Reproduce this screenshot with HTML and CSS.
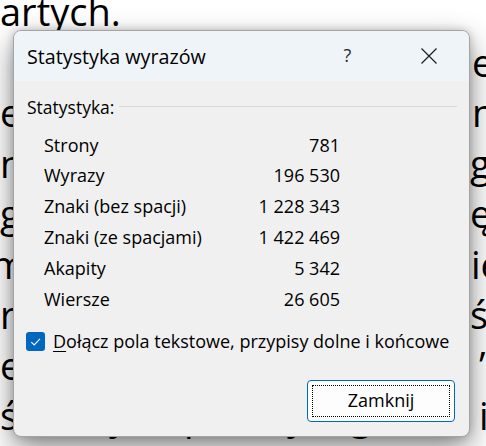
FILE: index.html
```html
<!DOCTYPE html>
<html lang="pl">
<head>
<meta charset="utf-8">
<title>Statystyka wyrazów</title>
<link rel="stylesheet" href="styles.css">
</head>
<body>
<div class="doc">
  <div class="ln"><span class="lft">artych.</span><span class="rgt"></span></div>
  <div class="ln"><span class="lft indent">wszystkich</span><span class="rgt p2">etap</span></div>
  <div class="ln"><span class="lft">etapów, w których</span><span class="rgt p2">mo</span></div>
  <div class="ln"><span class="lft">na podstawie tego</span><span class="rgt">ge</span></div>
  <div class="ln"><span class="lft">gdzie jest to</span><span class="rgt">ęs</span></div>
  <div class="ln"><span class="lft cut">mianowicie</span><span class="rgt p1">ie</span></div>
  <div class="ln"><span class="lft">rozdział</span><span class="rgt">śl</span></div>
  <div class="ln"><span class="lft">esej</span><span class="rgt p9">’</span></div>
  <div class="ln"><span class="lft">świat, jest przez jak głos</span><span class="rgt p9">in</span></div>
</div>

<div class="dialog">
  <div class="titlebar">
    <div class="title">Statystyka wyrazów</div>
    <div class="tb-btn help">?</div>
    <div class="tb-btn close">
      <svg width="16" height="16" viewBox="0 0 16 16"><path d="M0.5 0.5 L15.5 15.5 M15.5 0.5 L0.5 15.5" stroke="#1b1b1b" stroke-width="1.15" fill="none"/></svg>
    </div>
  </div>
  <div class="content">
    <div class="group-head"><span>Statystyka:</span><span class="rule"></span></div>
    <div class="stats">
      <span>Strony</span><span class="val">781</span>
      <span>Wyrazy</span><span class="val">196&nbsp;530</span>
      <span>Znaki (bez spacji)</span><span class="val">1&nbsp;228&nbsp;343</span>
      <span>Znaki (ze spacjami)</span><span class="val">1&nbsp;422&nbsp;469</span>
      <span>Akapity</span><span class="val">5&nbsp;342</span>
      <span>Wiersze</span><span class="val">26&nbsp;605</span>
    </div>
    <div class="check-row">
      <span class="checkbox"><svg width="19" height="19" viewBox="0 0 19 19"><path d="M5.3 10.2 L8.2 13 L14 6.8" stroke="#fff" stroke-width="1.1" fill="none"/></svg></span>
      <span class="check-label"><u>D</u>ołącz pola tekstowe, przypisy dolne i końcowe</span>
    </div>
    <div class="actions">
      <button class="btn" type="button">Zamknij</button>
    </div>
  </div>
</div>
</body>
</html>
```
FILE: styles.css
```css
html, body {
  margin: 0;
  padding: 0;
}
body {
  width: 486px;
  height: 446px;
  overflow: hidden;
  background: #ffffff;
  position: relative;
}
.doc {
  margin-top: -13.7px;
  font-family: "Open Sans", "Noto Sans", sans-serif;
  font-size: 38px;
  line-height: 50.5px;
  color: #000;
}
.ln {
  display: grid;
  grid-template-columns: 470px 1fr;
  height: 50.5px;
  white-space: nowrap;
  overflow: hidden;
}
.lft {
  overflow: hidden;
}
.indent { padding-left: 30px; }
.cut { margin-left: -9px; }
.rgt { overflow: visible; }
.p1 { padding-left: 1px; }
.p2 { padding-left: 2px; }
.p9 { padding-left: 9px; }

.dialog {
  position: absolute;
  left: 13px;
  top: 30px;
  width: 457px;
  height: 407px;
  box-sizing: border-box;
  border: 1px solid #a4a4a4;
  border-radius: 8px;
  background: #f0f0f0;
  box-shadow: 0 12px 30px rgba(0, 0, 0, 0.46), 0 0 8px rgba(0, 0, 0, 0.2);
  overflow: hidden;
  display: flex;
  flex-direction: column;
  font-family: "Open Sans", "Noto Sans", sans-serif;
  color: #000;
}
.titlebar {
  height: 50px;
  flex: none;
  background: #eff4f9;
  display: flex;
  align-items: center;
}
.title {
  flex: 1;
  padding-left: 13px;
  font-size: 19.7px;
  line-height: 27px;
  color: #000;
}
.tb-btn {
  width: 81px;
  height: 50px;
  display: flex;
  align-items: center;
  justify-content: center;
}
.help {
  font-size: 18px;
  color: #2a2a2a;
  padding-bottom: 2px;
  box-sizing: border-box;
}
.close svg {
  display: block;
}
.content {
  flex: 1;
  display: flex;
  flex-direction: column;
  padding: 16px 12px 14px 12px;
}
.group-head {
  display: flex;
  align-items: center;
  font-size: 17.5px;
  line-height: 20px;
  padding-left: 1px;
}
.rule {
  flex: 1;
  height: 1px;
  background: #d9d9d9;
  margin-left: 5px;
  margin-top: -2px;
}
.stats {
  display: grid;
  grid-template-columns: 1fr auto;
  width: 296px;
  margin: 12.6px 0 0 18px;
  font-size: 18px;
  line-height: 30.8px;
}
.val {
  text-align: right;
}
.check-row {
  display: flex;
  align-items: center;
  gap: 8px;
  margin-top: 17.6px;
  height: 19px;
}
.checkbox {
  width: 19px;
  height: 19px;
  border-radius: 3px;
  background: #0067c0;
  flex: none;
}
.checkbox svg {
  display: block;
}
.check-label {
  font-size: 18px;
  line-height: 19px;
  white-space: nowrap;
}
.check-label u {
  text-decoration-thickness: 1px;
  text-underline-offset: 3px;
}
.actions {
  margin-top: auto;
  display: flex;
  justify-content: flex-end;
  padding-right: 2px;
}
.btn {
  width: 148px;
  height: 42px;
  box-sizing: border-box;
  border: 1px solid #0067c0;
  border-radius: 4px;
  background: #fdfdfd;
  font-family: "Open Sans", "Noto Sans", sans-serif;
  font-size: 18px;
  color: #000;
  padding: 0 0 2px 0;
  outline: 1px dotted #000;
  outline-offset: -6px;
}
```
